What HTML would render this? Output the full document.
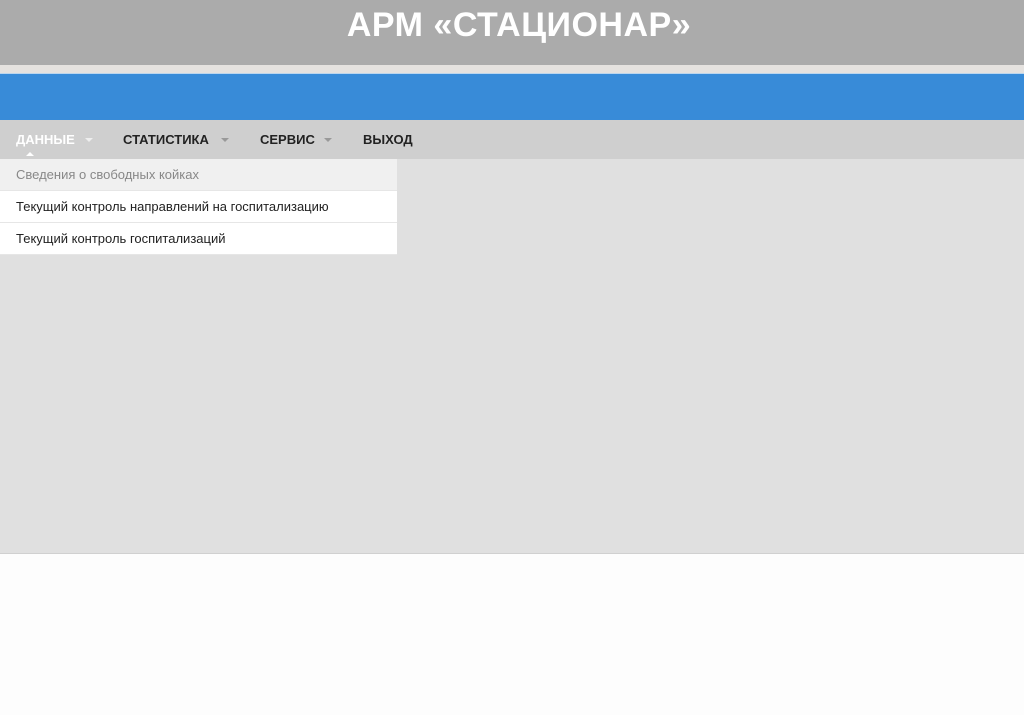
<!DOCTYPE html>
<html><head><meta charset="utf-8"><style>
*{margin:0;padding:0;box-sizing:border-box}
body{width:1024px;height:715px;overflow:hidden;background:#fdfdfd;font-family:"Liberation Sans",Arial,sans-serif;position:relative}
.hdr{position:absolute;left:0;top:0;width:1024px;height:65px;background:#ababab}
.hdr h1{position:absolute;left:0;width:1038px;text-align:center;top:6px;font-size:34px;font-weight:bold;color:#fff;letter-spacing:0.5px}
.strip{position:absolute;top:65px;height:9px;width:1024px;background:#e5e2df;border-bottom:1px solid #bcd6ee}
.blue{position:absolute;top:74px;height:46px;width:1024px;background:#388bd8}
.nav{position:absolute;top:120px;height:39px;width:1024px;background:#cfcfcf}
.nav span{position:absolute;top:12px;font-size:13px;font-weight:bold;color:#222}
.car{position:absolute;top:18px;width:0;height:0;border-left:4px solid transparent;border-right:4px solid transparent;border-top:4px solid #999}
.content{position:absolute;top:159px;height:395px;width:1024px;background:#e0e0e0;border-bottom:1px solid #d0d0d0}
.dd{position:absolute;top:159px;left:0;width:397px}
.dd div{height:32px;line-height:31px;padding-left:16px;font-size:13px;color:#222;background:#fff;border-bottom:1px solid #e6e6e6}
.dd div.f{background:#f0f0f0;color:#888}
</style></head><body>
<div class="hdr"><h1>АРМ «СТАЦИОНАР»</h1></div>
<div class="strip"></div>
<div class="blue"></div>
<div class="nav">
<span style="left:16px;color:#fff">ДАННЫЕ</span><i class="car" style="left:85px;border-top-color:#eee"></i>
<i style="position:absolute;left:26px;top:32px;border-left:4px solid transparent;border-right:4px solid transparent;border-bottom:4px solid #fff"></i>
<span style="left:123px">СТАТИСТИКА</span><i class="car" style="left:221px"></i>
<span style="left:260px">СЕРВИС</span><i class="car" style="left:324px"></i>
<span style="left:363px">ВЫХОД</span>
</div>
<div class="content"></div>
<div class="dd">
<div class="f">Сведения о свободных койках</div>
<div>Текущий контроль направлений на госпитализацию</div>
<div>Текущий контроль госпитализаций</div>
</div>
</body></html>
